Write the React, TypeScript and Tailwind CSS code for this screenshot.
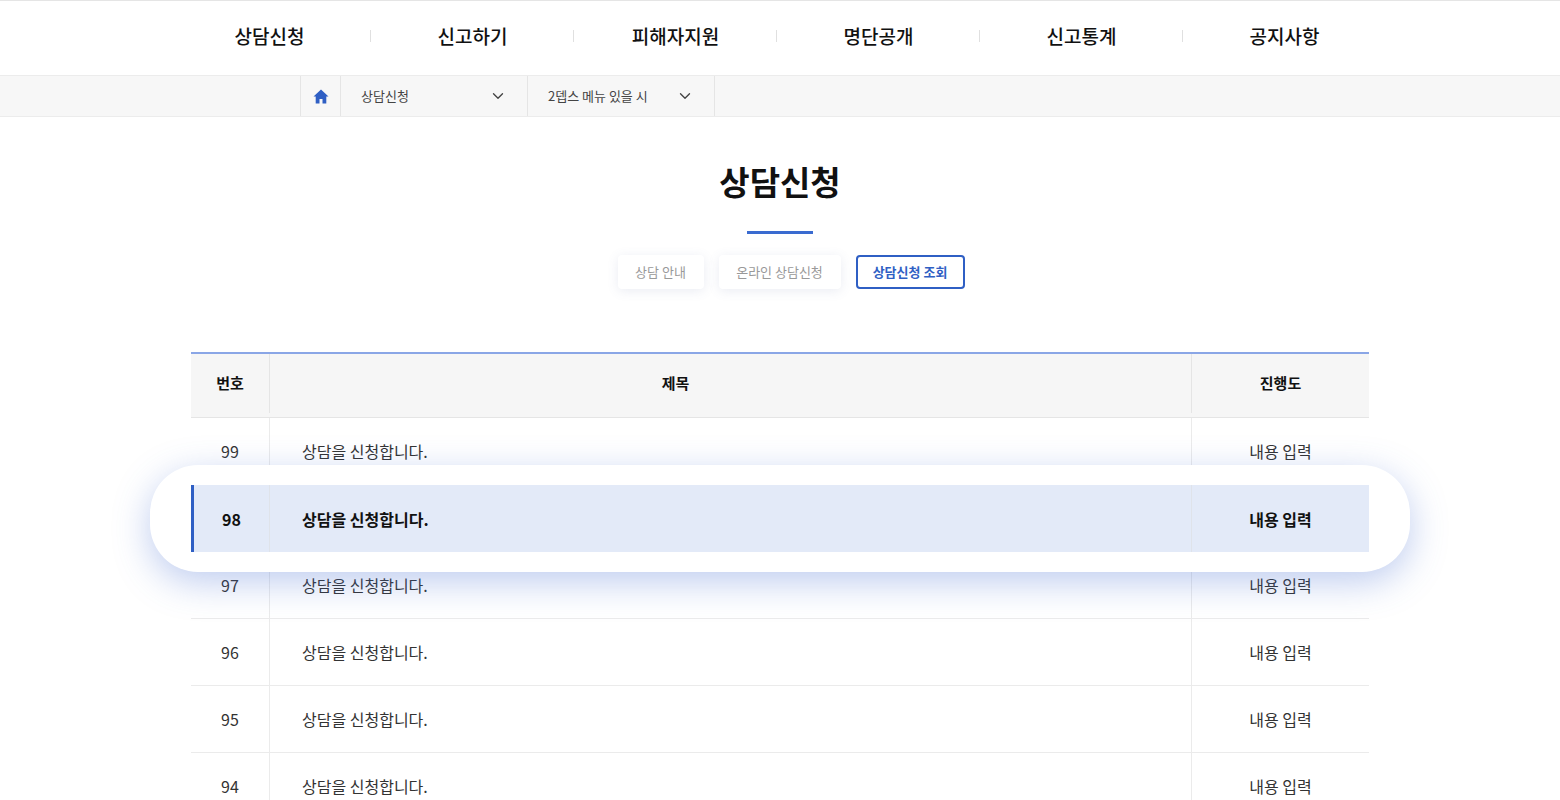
import { ChevronDown } from "lucide-react";

const font = { fontFamily: '"Noto Sans CJK KR", "Noto Sans", sans-serif' };
const menus = ["상담신청", "신고하기", "피해자지원", "명단공개", "신고통계", "공지사항"];
const rows = [99, 98, 97, 96, 95, 94];

function Row({ n, active }: { n: number; active?: boolean }) {
  if (active) {
    return (
      <div className="relative z-10">
        <div className="absolute -inset-x-[41px] -inset-y-[20px] rounded-[48px] bg-white shadow-[0_10px_36px_rgba(70,110,210,0.35)]" />
        <div className="relative grid h-[67px] grid-cols-[76px_1fr_177px] border-l-[3px] border-[#2f5fc4] bg-[#e3eaf8] text-[16px] font-bold text-[#111]">
          <div className="flex items-center justify-center border-r border-[#dfe3ea]">{n}</div>
          <div className="flex items-center border-r border-[#dfe3ea] pl-8">상담을 신청합니다.</div>
          <div className="flex items-center justify-center">내용 입력</div>
        </div>
      </div>
    );
  }
  return (
    <div className="grid h-[67px] grid-cols-[79px_1fr_177px] border-b border-[#ebebeb] text-[16px] text-[#333]">
      <div className="flex items-center justify-center border-r border-[#ebebeb]">{n}</div>
      <div className="flex items-center border-r border-[#ebebeb] pl-8">상담을 신청합니다.</div>
      <div className="flex items-center justify-center">내용 입력</div>
    </div>
  );
}

export default function App() {
  return (
    <div className="h-[800px] overflow-hidden bg-white" style={font}>
      <nav className="flex h-[75px] justify-center border-t border-[#e5e5e5] pb-1 pr-[6px]">
        {menus.map((m, i) => (
          <div key={m} className="relative flex w-[203px] items-center justify-center text-[19px] font-medium text-[#111]">
            {m}
            {i < menus.length - 1 && <span className="absolute right-0 h-3 w-px bg-[#e0e0e0]" />}
          </div>
        ))}
      </nav>
      <div className="flex h-[42px] border-y border-[#ececec] bg-[#f7f7f7] pl-[300px] text-[13px] text-[#444]">
        <div className="flex w-[41px] items-center justify-center border-x border-[#e5e5e5]">
          <svg width="16" height="15" viewBox="0 0 16 15" fill="#2f5fc4"><path d="M8 0.5 0.5 7.5h2.2V14.5h3.8V10h3V14.5h3.8V7.5h2.2z" /></svg>
        </div>
        <div className="flex w-[187px] items-center justify-between border-r border-[#e5e5e5] px-5 pb-px">
          상담신청 <ChevronDown size={18} strokeWidth={1.8} className="text-[#444]" />
        </div>
        <div className="flex w-[187px] items-center justify-between border-r border-[#e5e5e5] px-5 pb-px">
          2뎁스 메뉴 있을 시 <ChevronDown size={18} strokeWidth={1.8} className="text-[#444]" />
        </div>
      </div>
      <h1 className="mt-[42px] text-center text-[33px] font-bold leading-[44px] text-[#111]">상담신청</h1>
      <div className="mx-auto mt-[28px] h-[3px] w-[66px] bg-[#3a6bd0]" />
      <div className="mt-[21px] flex justify-center gap-[15px] pl-[22px] text-[13px]">
        <div className="flex h-[34px] w-[86px] items-center justify-center rounded bg-white text-[#999] shadow-[0_2px_12px_rgba(80,100,160,0.12)]">상담 안내</div>
        <div className="flex h-[34px] w-[122px] items-center justify-center rounded bg-white text-[#999] shadow-[0_2px_12px_rgba(80,100,160,0.12)]">온라인 상담신청</div>
        <div className="flex h-[34px] w-[109px] items-center justify-center rounded border-2 border-[#2f5fc4] bg-white font-bold text-[#2f5fc4]">상담신청 조회</div>
      </div>
      <div className="mx-auto mt-[63px] w-[1178px] border-t-2 border-[#8aa6e6]">
        <div className="grid h-[64px] grid-cols-[79px_1fr_177px] border-b border-[#e5e5e5] bg-[#f6f6f6] pb-1 text-[15px] font-bold text-[#111]">
          <div className="flex items-center justify-center border-r border-[#e5e5e5]">번호</div>
          <div className="flex items-center justify-center border-r border-[#e5e5e5] pr-[110px]">제목</div>
          <div className="flex items-center justify-center">진행도</div>
        </div>
        {rows.map((n) => (
          <Row key={n} n={n} active={n === 98} />
        ))}
      </div>
    </div>
  );
}
